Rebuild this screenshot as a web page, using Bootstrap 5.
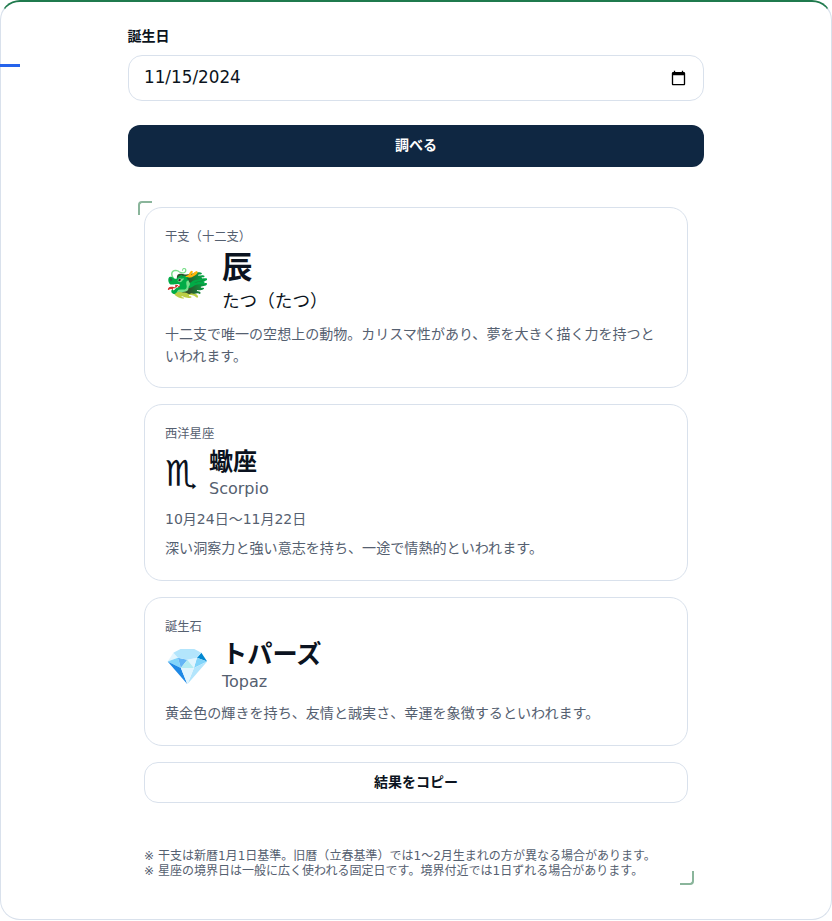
<!doctype html>
<html lang="ja">
<head>
<meta charset="utf-8">
<title>誕生日</title>
<link href="https://cdn.jsdelivr.net/npm/bootstrap@5.3.0/dist/css/bootstrap.min.css" rel="stylesheet">
<style>
html,body{background:#fff;height:100%}
body{font-family:"DejaVu Sans","Noto Sans CJK JP",sans-serif;color:#0b1320}
.shell{height:920px;border:1px solid #d9e1ec;border-top:2px solid #1f7a4d;border-radius:20px;padding-top:26px;position:relative;background:#fff}
.tick{position:absolute;left:-1px;top:62px;width:20px;height:3px;background:#2563eb}
.inner{width:576px;margin:0 auto 0 127px}
.fld-label{font-size:14px;font-weight:700;line-height:17px;margin-bottom:10px;margin-left:-.5px;color:#0b1320}
.date-in{height:46px;border:1px solid #d9e1ec;border-radius:14px;padding:0 14px 0 15px;font-size:16.8px;color:#0b1320;font-family:inherit}
.go-btn{height:42px;margin-top:24px;padding:0 0 2px;background:#0f2742;color:#fff;border:0;border-radius:12px;font-size:14px;font-weight:700}
.go-btn:hover{background:#0f2742;color:#fff}
.results{margin:40px 16px 0;position:relative}
.mk{position:absolute;width:14px;height:14px;border:2px solid #8ab59b}
.mk-a{left:-6px;top:-6px;border-right:0;border-bottom:0;border-top-left-radius:4px}
.mk-b{right:-6px;bottom:-6px;border-left:0;border-top:0;border-bottom-right-radius:4px}
.pane{border:1px solid #d9e1ec;border-radius:18px;padding:20px;margin-bottom:16px;background:#fff}
.pane-tag{font-size:12.32px;line-height:18px;color:#556070;margin-bottom:4px}
.pic{font-size:36px;line-height:1;width:45px;text-align:left}
.zod{font-size:36px;line-height:1;width:32px;color:#0b1320}
.big{font-size:30.4px;line-height:35px;color:#0b1320;font-weight:700}
.sub{font-size:17.6px;line-height:28px;margin-top:2px;color:#0b1320}
.ttl{font-size:24px;font-weight:700;line-height:30px;color:#0b1320}
.ttl-w{font-size:25.2px}
.en{font-size:16px;line-height:24px;color:#556070}
.dsc{font-size:14.08px;line-height:22px;color:#556070;margin:0 0 1px}
.dsc-2{font-size:14.02px;margin-bottom:0}
.rng{font-size:14px;line-height:21px;color:#556070;margin-bottom:7px;margin-top:8px}
.copy-btn{height:41px;border:1px solid #d9e1ec;border-radius:14px;background:#fff;font-size:14px;font-weight:700;color:#0b1320}
.foot{font-size:12.03px;line-height:15px;color:#556070;margin-top:46px}
.gap-row{gap:12px}
</style>
</head>
<body>
<div class="shell">
  <div class="tick"></div>
  <div class="inner">
    <label class="fld-label d-block" for="bd">誕生日</label>
    <input id="bd" type="date" class="form-control date-in" value="2024-11-15">
    <button type="button" class="btn go-btn w-100">調べる</button>
    <div class="results">
      <span class="mk mk-a"></span><span class="mk mk-b"></span>
      <div class="pane">
        <div class="pane-tag">干支（十二支）</div>
        <div class="d-flex align-items-center gap-row">
          <div class="pic">🐲</div>
          <div>
            <div class="big">辰</div>
            <div class="sub">たつ（たつ）</div>
          </div>
        </div>
        <p class="dsc dsc-2 mt-2">十二支で唯一の空想上の動物。カリスマ性があり、夢を大きく描く力を持つといわれます。</p>
      </div>
      <div class="pane">
        <div class="pane-tag">西洋星座</div>
        <div class="d-flex align-items-center gap-row">
          <div class="zod">♏</div>
          <div>
            <div class="ttl">蠍座</div>
            <div class="en">Scorpio</div>
          </div>
        </div>
        <div class="rng">10月24日〜11月22日</div>
        <p class="dsc">深い洞察力と強い意志を持ち、一途で情熱的といわれます。</p>
      </div>
      <div class="pane">
        <div class="pane-tag">誕生石</div>
        <div class="d-flex align-items-center gap-row">
          <div class="pic">💎</div>
          <div>
            <div class="ttl ttl-w">トパーズ</div>
            <div class="en">Topaz</div>
          </div>
        </div>
        <p class="dsc mt-2">黄金色の輝きを持ち、友情と誠実さ、幸運を象徴するといわれます。</p>
      </div>
      <button type="button" class="btn copy-btn w-100">結果をコピー</button>
      <div class="foot">※ 干支は新暦1月1日基準。旧暦（立春基準）では1〜2月生まれの方が異なる場合があります。<br>※ 星座の境界日は一般に広く使われる固定日です。境界付近では1日ずれる場合があります。</div>
    </div>
  </div>
</div>
<script src="https://cdn.jsdelivr.net/npm/bootstrap@5.3.0/dist/js/bootstrap.bundle.min.js"></script>
</body>
</html>
